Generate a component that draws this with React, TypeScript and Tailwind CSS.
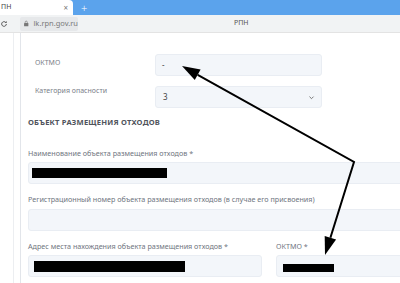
import React from 'react';

const font = { fontFamily: '"Noto Sans", "Open Sans", Arial, sans-serif' };

const Field: React.FC<{ className?: string; children?: React.ReactNode }> = ({ className = '', children }) => (
  <div className={`h-[22px] rounded-[3px] bg-[#f3f6fa] border border-[#e9edf3] flex items-center ${className}`}>
    {children}
  </div>
);

const Label: React.FC<{ children: React.ReactNode }> = ({ children }) => (
  <div className="text-[7.2px] leading-[10px] text-[#6f7580] whitespace-nowrap">{children}</div>
);

const App: React.FC = () => {
  return (
    <div className="relative w-[400px] h-[283px] overflow-hidden bg-white" style={font}>
      {/* Tab strip */}
      <div className="h-[15px] flex bg-[#5ba3ec]">
        <div className="w-[73px] bg-white flex items-center justify-between pl-[1px] pr-[5px] rounded-tr-[4px]">
          <span className="text-[7px] text-[#444]">ПН</span>
          <span className="text-[8px] text-[#777] leading-none">×</span>
        </div>
        <div className="pl-[8px] flex items-center text-white text-[11px] leading-none font-light">+</div>
      </div>

      {/* Address bar */}
      <div className="h-[18px] bg-[#f1f3f4] border-b border-[#e3e3e3] flex items-center">
        <svg width="8" height="8" viewBox="0 0 24 24">
          <path d="M19 12a7 7 0 1 1-2.05-4.95" fill="none" stroke="#555" strokeWidth="3" />
          <path d="M20 3v6h-6z" fill="#555" />
        </svg>
        <div className="ml-[12px] h-[14px] w-[58px] rounded-[2px] bg-[#e6e8ea] flex items-center pl-[3px]">
          <svg width="7" height="7" viewBox="0 0 24 24">
            <rect x="4" y="10" width="16" height="12" rx="2" fill="#777" />
            <path d="M8 10V7a4 4 0 0 1 8 0v3" fill="none" stroke="#777" strokeWidth="2.5" />
          </svg>
          <span className="ml-[4px] text-[7.5px] text-[#7a7a7a]">lk.rpn.gov.ru</span>
        </div>
        <span className="ml-[156px] text-[7px] text-[#555]">РПН</span>
      </div>

      {/* Page */}
      <div className="flex h-[250px]">
        <div className="w-[14px] border-r border-[#eceef1] shrink-0" />
        <div className="ml-[6px] border-l border-[#e2e5ea] w-[600px] shrink-0 pl-[7px] pt-[21px]">
          <div className="pl-[7px]">
            <div className="flex items-start">
              <div className="w-[120px] pt-[4px] text-[7px] text-[#7b8089]">ОКТМО</div>
              <Field className="w-[167px] pl-[6px]">
                <span className="text-[8px] text-[#444]">-</span>
              </Field>
            </div>
            <div className="flex items-start mt-[10px]">
              <div className="w-[120px] text-[7px] text-[#7b8089]">Категория опасности</div>
              <Field className="w-[167px] pl-[7px] pr-[6px] justify-between">
                <span className="text-[8px] text-[#444]">3</span>
                <svg width="7" height="7" viewBox="0 0 24 24">
                  <path d="M5 9l7 7 7-7" fill="none" stroke="#666" strokeWidth="3" />
                </svg>
              </Field>
            </div>
          </div>

          <div className="mt-[9px] text-[7.6px] font-bold tracking-[0.2px] text-[#50545c]">
            ОБЪЕКТ РАЗМЕЩЕНИЯ ОТХОДОВ
          </div>

          <div className="mt-[20px]">
            <Label>Наименование объекта размещения отходов *</Label>
            <Field className="w-[520px] mt-[4px] pl-[3px]">
              <div className="w-[135px] h-[10px] bg-black" />
            </Field>
          </div>

          <div className="mt-[10px]">
            <Label>Регистрационный номер объекта размещения отходов (в случае его присвоения)</Label>
            <Field className="w-[520px] mt-[5px]" />
          </div>

          <div className="mt-[10px] flex gap-[14px]">
            <div>
              <Label>Адрес места нахождения объекта размещения отходов *</Label>
              <Field className="w-[234px] mt-[4px] pl-[5px]">
                <div className="w-[151px] h-[11px] bg-black" />
              </Field>
            </div>
            <div>
              <Label>ОКТМО *</Label>
              <Field className="w-[200px] mt-[4px] pl-[6px] pt-[3px]">
                <div className="w-[51px] h-[8px] bg-black" />
              </Field>
            </div>
          </div>
        </div>
      </div>

      {/* Annotation arrows */}
      <svg className="absolute inset-0 pointer-events-none" width="400" height="283" viewBox="0 0 400 283">
        <polyline points="197.7,74.8 354,162 330.4,237.8" fill="none" stroke="#000" strokeWidth="2" strokeLinejoin="miter" />
        <polygon points="182,66 200.6,69.6 194.8,80" fill="#000" />
        <polygon points="325,255 336.1,239.6 324.7,236" fill="#000" />
      </svg>
    </div>
  );
};

export default App;
